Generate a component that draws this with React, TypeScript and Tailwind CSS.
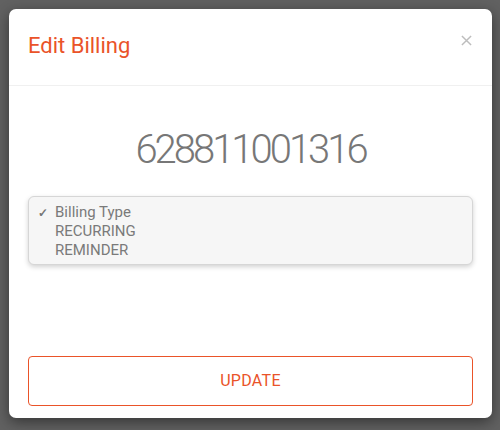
import React from "react";

// ---- Edit Billing modal ---- //

const options = [
  { label: "Billing Type", checked: true },
  { label: "RECURRING", checked: false },
  { label: "REMINDER", checked: false },
];

export default function App() {
  return (
    <div
      className="w-[500px] h-[430px] bg-[#616161] p-[9px] pb-[12px]"
      style={{ fontFamily: "Roboto, 'Noto Sans', sans-serif" }}
    >
      <div className="flex h-full w-[483px] flex-col rounded-[7px] bg-white shadow-[0_4px_14px_rgba(0,0,0,0.45)]">
        {/* header */}
        <div className="flex h-[77px] items-center justify-between border-b border-[#f0f0f0] pl-[19px] pr-[20px]">
          <h1 className="text-[22px] text-[#ea5329] mt-[-4px]">Edit Billing</h1>
          <button className="text-[#bdbdbd] mt-[-13px]">
            <svg width="11" height="11" viewBox="0 0 12 12" fill="none" stroke="currentColor" strokeWidth="1.6">
              <path d="M1 1L11 11M11 1L1 11" />
            </svg>
          </button>
        </div>

        {/* body */}
        <div className="flex flex-1 flex-col px-[19px]">
          <div className="mt-[40px] text-center text-[40px] leading-[48px] font-light tracking-[-3px] text-[#777777]">
            628811001316
          </div>

          <div className="mt-[22px] h-[69px] rounded-[6px] border border-[#d6d6d6] bg-[#f6f6f6] pt-[6px] shadow-[0_2px_5px_rgba(0,0,0,0.18)]">
            {options.map((o) => (
              <div key={o.label} className="flex h-[19px] items-center text-[15px] text-[#7a7a7a]">
                <span className="w-[26px] pl-[9px] text-[12px] font-bold text-[#777]">{o.checked ? "✓" : ""}</span>
                <span>{o.label}</span>
              </div>
            ))}
          </div>

          <div className="flex-1" />

          <button className="mb-[12px] h-[50px] w-full rounded-[4px] border border-[#ea5329] text-[16px] tracking-[0.3px] text-[#ea5329]">
            UPDATE
          </button>
        </div>
      </div>
    </div>
  );
}
